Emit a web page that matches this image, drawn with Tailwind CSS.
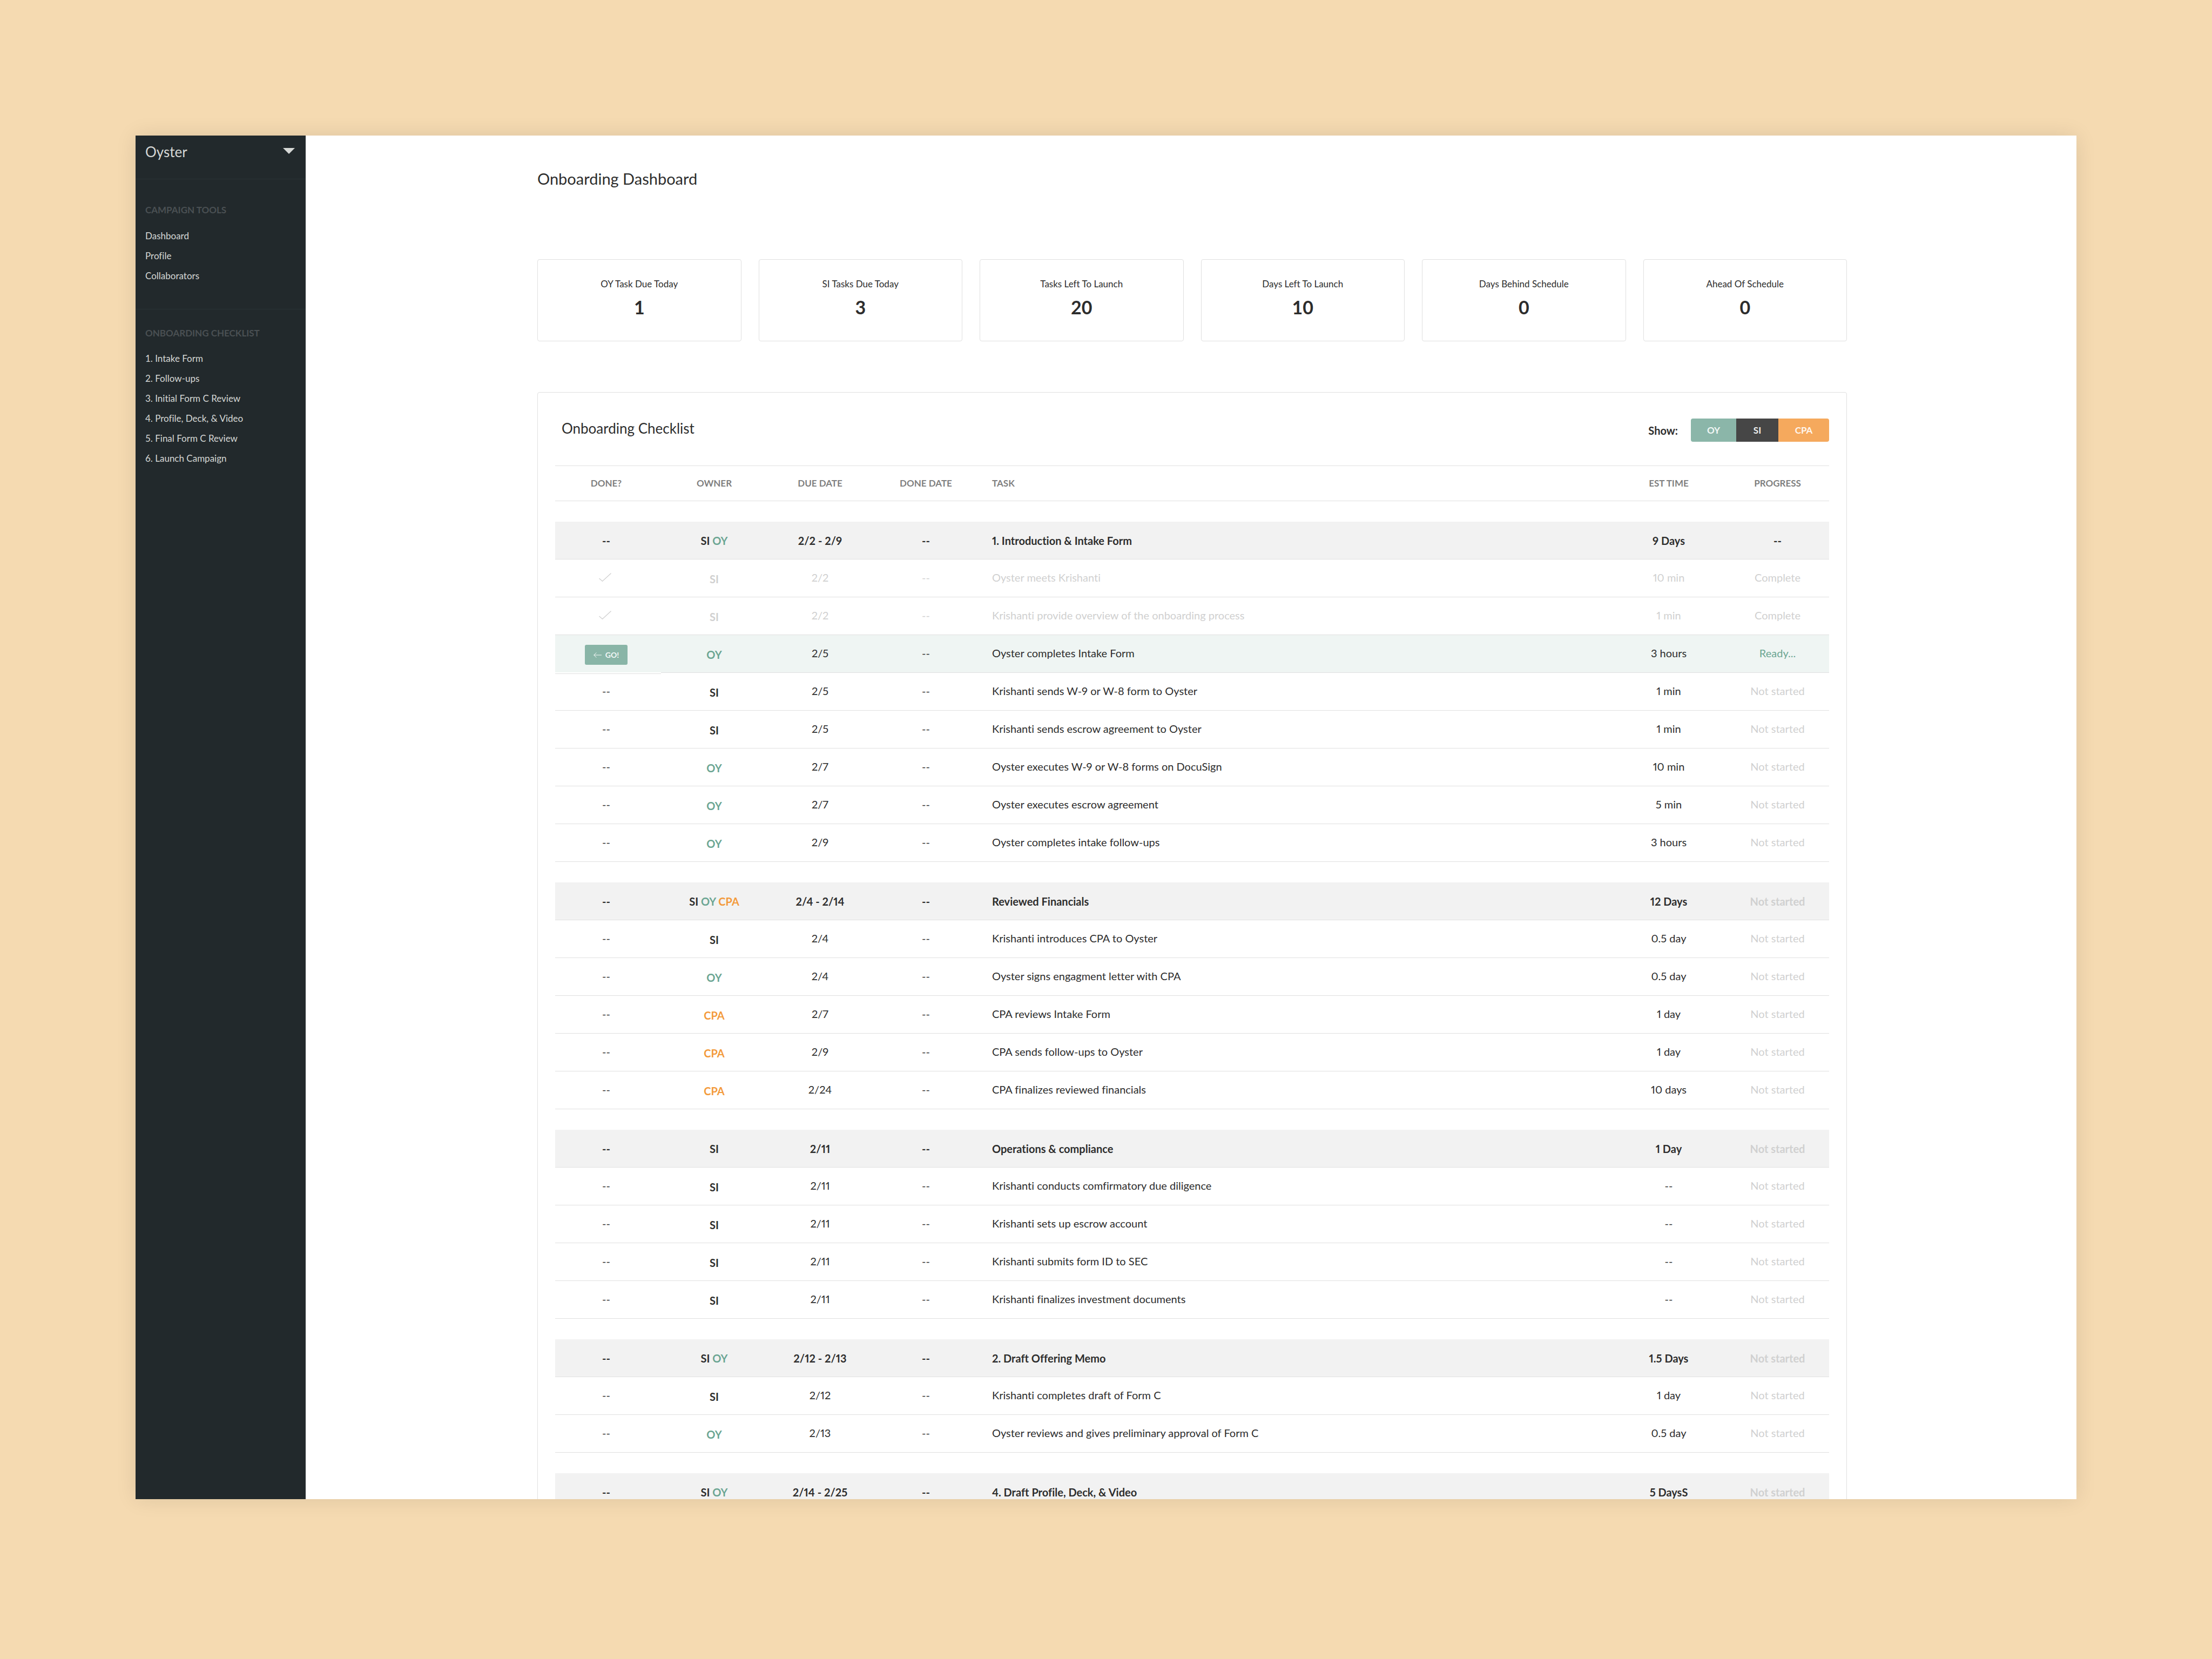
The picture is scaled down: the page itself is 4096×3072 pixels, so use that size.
<!DOCTYPE html>
<html lang="en">
<head>
<meta charset="utf-8">
<meta name="viewport" content="width=device-width, initial-scale=1">
<title>Onboarding Dashboard</title>
<script src="https://cdn.jsdelivr.net/npm/@tailwindcss/browser@4"></script>
</head>
<body class="h-screen bg-[#f5dab1] px-[251px] pt-[251px] pb-[296px] font-['Lato','Open_Sans',sans-serif] text-[#2d2d2d] [font-variant-ligatures:none]">
<div class="flex h-full overflow-hidden bg-white shadow-[0_0_36px_rgba(0,0,0,0.1)]">

  <aside class="w-[315px] shrink-0 bg-[#22292c] text-[17px] text-[#d6d8d6]">
    <button type="button" class="flex w-full items-center justify-between border-b border-[#2a3235] pt-[10px] pr-5 pb-[30px] pl-[18px] text-[26px] leading-10">
      Oyster
      <svg class="mb-1 h-[11px] w-[22px]" viewBox="0 0 22 11" fill="currentColor" aria-hidden="true"><path d="M0 0h22L11 11z"/></svg>
    </button>
    <nav aria-label="Campaign tools" class="border-b border-[#2a3235] px-[18px] pt-[45px] pb-[43px]">
      <h2 class="mb-[17px] leading-6 font-bold text-[#4a5053]">CAMPAIGN TOOLS</h2>
      <ul class="leading-[37px]">
        <li><a href="#dashboard">Dashboard</a></li>
        <li><a href="#profile">Profile</a></li>
        <li><a href="#collaborators">Collaborators</a></li>
      </ul>
    </nav>
    <nav aria-label="Onboarding checklist" class="px-[18px] pt-8">
      <h2 class="mb-4 leading-6 font-bold text-[#4a5053]">ONBOARDING CHECKLIST</h2>
      <ul class="leading-[37px]">
        <li><a href="#intake">1. Intake Form</a></li>
        <li><a href="#follow-ups">2. Follow-ups</a></li>
        <li><a href="#initial-review">3. Initial Form C Review</a></li>
        <li><a href="#profile-deck-video">4. Profile, Deck, &amp; Video</a></li>
        <li><a href="#final-review">5. Final Form C Review</a></li>
        <li><a href="#launch">6. Launch Campaign</a></li>
      </ul>
    </nav>
  </aside>

  <main class="min-w-0 flex-1 overflow-hidden pt-[60px] pl-1">
    <div class="mx-auto max-w-[2425px]">
      <h1 class="text-[29px] leading-10">Onboarding Dashboard</h1>

      <dl id="stats" class="mt-[129px] grid grid-cols-6 gap-8 text-center"></dl>

      <section class="mt-[94px] rounded border border-[#e0e0e0] px-8">
        <div class="flex items-start justify-between pt-12 pb-11 pl-3">
          <h2 class="text-[26px] leading-9">Onboarding Checklist</h2>
          <div class="flex items-center gap-6" role="group" aria-labelledby="show-label">
            <span id="show-label" class="text-[20px] font-bold">Show:</span>
            <div class="flex h-[43px] overflow-hidden rounded text-[17px] font-bold text-white/90">
              <button type="button" class="w-[84px] bg-[#8bb6a9]">OY</button>
              <button type="button" class="w-[78px] bg-[#464646]">SI</button>
              <button type="button" class="w-[94px] bg-[#f5a95d]">CPA</button>
            </div>
          </div>
        </div>

        <table class="w-full table-fixed border-separate border-spacing-0 text-center text-[20px] proportional-nums">
          <colgroup>
            <col class="w-[189px]"><col class="w-[211px]"><col class="w-[181px]"><col class="w-[211px]"><col><col class="w-[212px]"><col class="w-[191px]">
          </colgroup>
          <thead class="text-[17px] text-[#7f7f7f] [&_th]:h-[66px] [&_th]:border-y [&_th]:border-[#e0e0e0] [&_th]:font-bold">
            <tr><th>DONE?</th><th>OWNER</th><th>DUE DATE</th><th>DONE DATE</th><th class="pl-[17px] text-left">TASK</th><th>EST TIME</th><th>PROGRESS</th></tr>
          </thead>
        </table>
      </section>
    </div>
  </main>
</div>

<script>
  const stats = [
    ['OY Task Due Today', 1], ['SI Tasks Due Today', 3], ['Tasks Left To Launch', 20],
    ['Days Left To Launch', 10], ['Days Behind Schedule', 0], ['Ahead Of Schedule', 0],
  ];
  document.getElementById('stats').innerHTML = stats.map(([label, value]) => `
    <div class="h-[152px] rounded border border-[#e0e0e0] pt-[33px]">
      <dt class="text-[17px] leading-6">${label}</dt>
      <dd class="mt-[11px] text-[34px] leading-10 font-bold">${value}</dd>
    </div>`).join('');

  // Each group: its summary row first, then its tasks.
  // Row: owners, due date, task, estimate, progress, state
  const groups = [
    [
      ['SI OY', '2/2 - 2/9', '1. Introduction & Intake Form', '9 Days', '--'],
      ['SI', '2/2', 'Oyster meets Krishanti', '10 min', 'Complete', 'done'],
      ['SI', '2/2', 'Krishanti provide overview of the onboarding process', '1 min', 'Complete', 'done'],
      ['OY', '2/5', 'Oyster completes Intake Form', '3 hours', 'Ready...', 'ready'],
      ['SI', '2/5', 'Krishanti sends W-9 or W-8 form to Oyster', '1 min'],
      ['SI', '2/5', 'Krishanti sends escrow agreement to Oyster', '1 min'],
      ['OY', '2/7', 'Oyster executes W-9 or W-8 forms on DocuSign', '10 min'],
      ['OY', '2/7', 'Oyster executes escrow agreement', '5 min'],
      ['OY', '2/9', 'Oyster completes intake follow-ups', '3 hours'],
    ],
    [
      ['SI OY CPA', '2/4 - 2/14', 'Reviewed Financials', '12 Days'],
      ['SI', '2/4', 'Krishanti introduces CPA to Oyster', '0.5 day'],
      ['OY', '2/4', 'Oyster signs engagment letter with CPA', '0.5 day'],
      ['CPA', '2/7', 'CPA reviews Intake Form', '1 day'],
      ['CPA', '2/9', 'CPA sends follow-ups to Oyster', '1 day'],
      ['CPA', '2/24', 'CPA finalizes reviewed financials', '10 days'],
    ],
    [
      ['SI', '2/11', 'Operations & compliance', '1 Day'],
      ['SI', '2/11', 'Krishanti conducts comfirmatory due diligence', '--'],
      ['SI', '2/11', 'Krishanti sets up escrow account', '--'],
      ['SI', '2/11', 'Krishanti submits form ID to SEC', '--'],
      ['SI', '2/11', 'Krishanti finalizes investment documents', '--'],
    ],
    [
      ['SI OY', '2/12 - 2/13', '2. Draft Offering Memo', '1.5 Days'],
      ['SI', '2/12', 'Krishanti completes draft of Form C', '1 day'],
      ['OY', '2/13', 'Oyster reviews and gives preliminary approval of Form C', '0.5 day'],
    ],
    [
      ['SI OY', '2/14 - 2/25', '4. Draft Profile, Deck, & Video', '5 DaysS'],
    ],
  ];

  const ownerColor = { SI: '', OY: 'text-[#6ba592]', CPA: 'text-[#f39a3b]' };
  const check = `<svg class="mx-auto h-4 w-[23px]" viewBox="0 0 23 16" fill="none" stroke="currentColor" stroke-width="1.3" role="img" aria-label="Done"><path d="M.5 10 6.5 15.2 22.5.5"/></svg>`;
  const go = `<button type="button" class="mx-auto flex h-[37px] w-[79px] items-center justify-center gap-[7px] rounded-[3px] bg-[#89b5a7] text-[14px] font-bold text-white/90">
      <svg class="h-[10px] w-[15px]" viewBox="0 0 15 10" fill="none" stroke="currentColor" stroke-width="1" aria-hidden="true"><path d="M15 5H.7M5.5.4.7 5 5.5 9.6"/></svg>GO!</button>
      <span class="absolute -bottom-[3px] left-0 h-[3px] w-[196px] border-b border-[#e0e0e0] bg-white"></span>`;

  const table = document.querySelector('table');
  for (const rows of groups) {
    const html = rows.map(([owners, due, task, est, progress, state], i) => {
      const head = i === 0;
      const rowClass = head ? 'bg-[#f2f2f2] font-bold'
        : state === 'done' ? 'text-[#d0d0d0]'
        : state === 'ready' ? 'bg-[#eff5f3]' : '';
      const owner = owners.split(' ').map(o =>
        `<span class="${state === 'done' ? '' : ownerColor[o]}">${o}</span>`).join(' ');
      const pad = head ? '' : 'pb-[3px]';
      const donePad = state === 'done' ? 'pr-1 pb-[3px]' : state === 'ready' ? 'pt-1' : pad;
      const progressClass = state === 'ready' ? 'text-[#6ba592]' : progress ? '' : 'text-[#d0d0d0]';
      return `<tr class="${rowClass}">
        <td class="relative ${donePad}">${state === 'done' ? check : state === 'ready' ? go : '--'}</td>
        <td class="${head ? '' : 'pt-0.5 font-bold'}">${owner}</td>
        <td class="${pad}">${due}</td>
        <td class="${pad}">--</td>
        <td class="pl-[17px] text-left ${pad}">${task.replace('&', '&amp;')}</td>
        <td class="${pad}">${est}</td>
        <td class="${pad} ${progressClass}">${progress || 'Not started'}</td>
      </tr>`;
    }).join('');
    table.insertAdjacentHTML('beforeend', `
      <tbody aria-hidden="true"><tr><td colspan="7" class="h-[38px] p-0"></td></tr></tbody>
      <tbody class="[&_td]:h-[70px] [&_td]:border-b [&_td]:border-[#e0e0e0]">${html}</tbody>`);
  }
</script>
</body>
</html>
